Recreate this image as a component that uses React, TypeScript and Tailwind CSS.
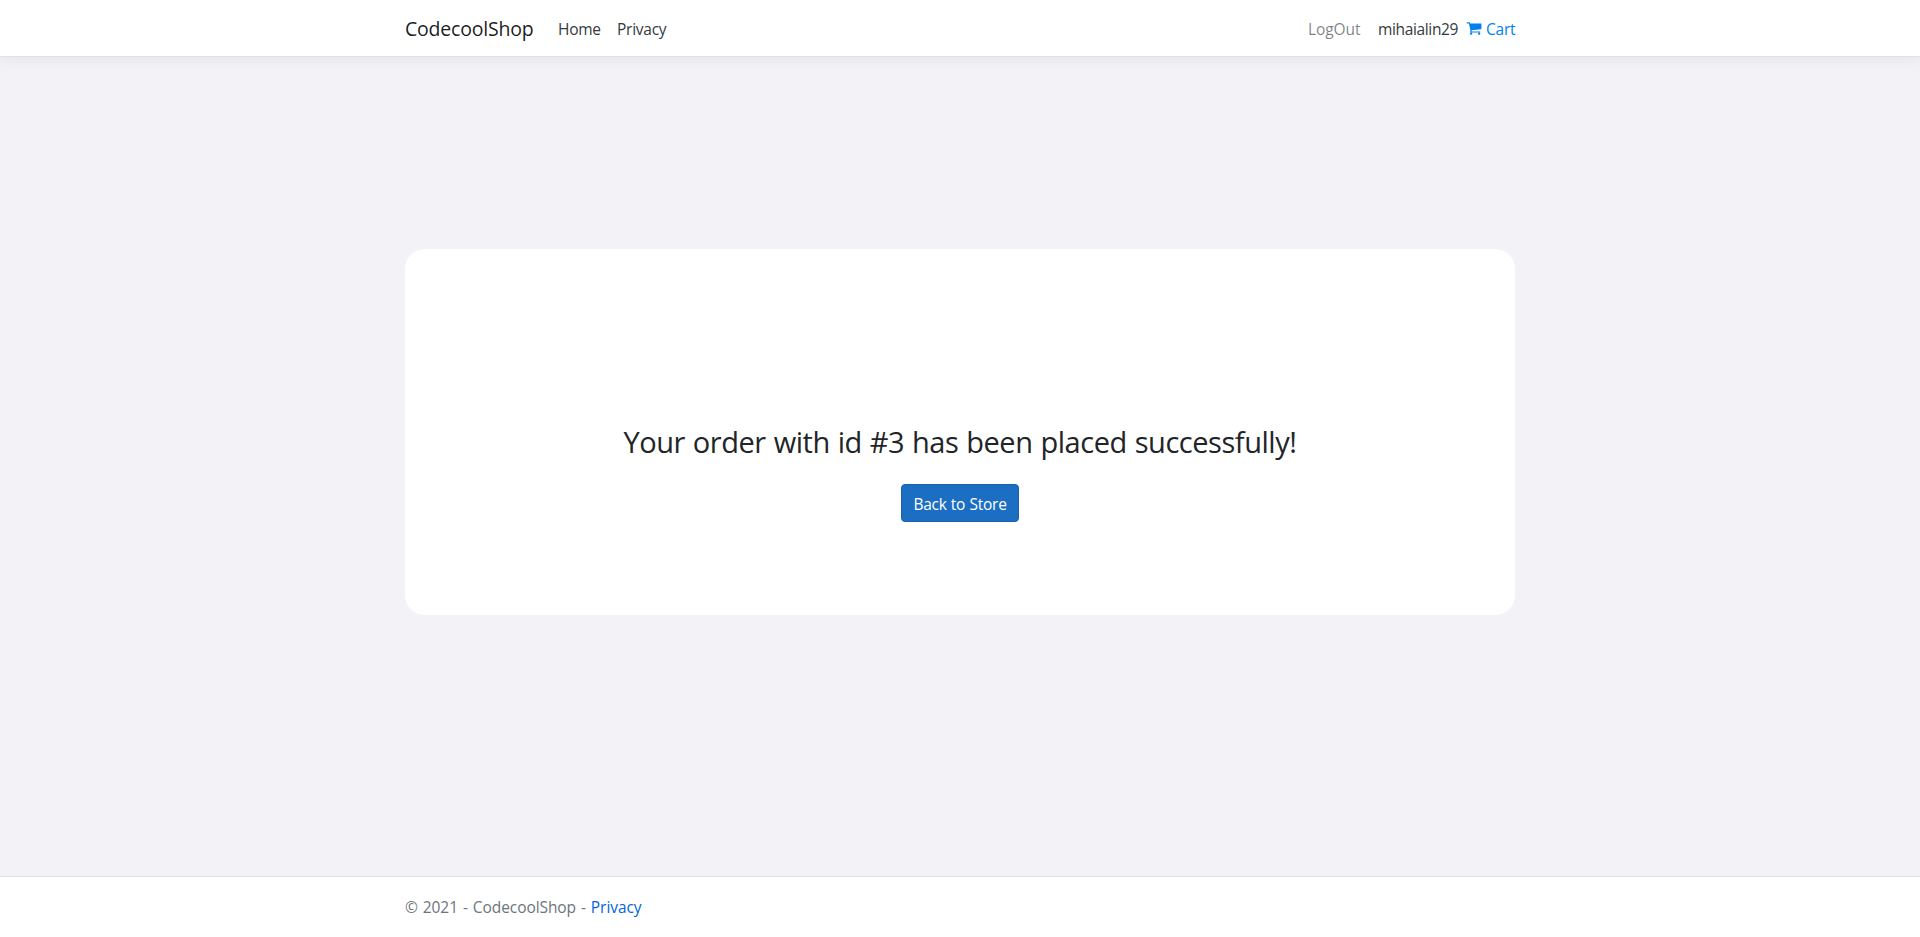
function CartIcon() {
  return (
    <svg viewBox="0 0 1792 1792" className="mr-[4px] mb-0.5 size-4 shrink-0 fill-current" aria-hidden="true">
      <path d="M704 1536q0 52-38 90t-90 38-90-38-38-90 38-90 90-38 90 38 38 90zm896 0q0 52-38 90t-90 38-90-38-38-90 38-90 90-38 90 38 38 90zm128-1088v512q0 24-16.5 42.5t-40.5 21.5l-1044 122q13 60 13 70 0 16-24 64h920q26 0 45 19t19 45-19 45-45 19h-1024q-26 0-45-19t-19-45q0-11 8-31.5t16-36 21.5-40 15.5-29.5l-177-823h-204q-26 0-45-19t-19-45 19-45 45-19h256q16 0 28.5 6.5t19.5 15.5 13 24.5 8 26 5.5 29.5 4.5 26h1201q26 0 45 19t19 45z" />
    </svg>
  );
}

function Header() {
  return (
    <header className="h-[57px] shrink-0 border-b border-[#dee2e6] bg-white shadow-[0_4px_12px_rgba(0,0,0,0.05)]">
      <nav className="mx-auto flex h-14 w-[1110px] items-center justify-between pt-0.5 whitespace-nowrap">
        <div className="flex items-center">
          <a className="w-[153px] text-[19.5px] leading-[30px] tracking-[-0.2px] text-black/90">CodecoolShop</a>
          <a className="w-[59px] text-[#343a40]">Home</a>
          <a className="text-[#343a40]">Privacy</a>
        </div>
        <div className="flex items-center">
          <a className="w-[70px] tracking-[-0.1px] text-black/50">LogOut</a>
          <span className="w-[88px] tracking-[-0.35px] text-[#343a40]">mihaialin29</span>
          <a className="flex w-[49px] items-center text-[#0080f0]">
            <CartIcon />
            Cart
          </a>
        </div>
      </nav>
    </header>
  );
}

export default function App() {
  return (
    <div className="flex h-[937px] flex-col bg-[#f2f2f7] font-['Open_Sans','Noto_Sans',sans-serif] text-[15.5px] leading-6 tracking-[-0.25px] text-[#212529]">
      <Header />
      <main className="mx-auto w-[1110px] grow pt-48">
        <section className="flex h-[366px] flex-col items-center rounded-[20px] bg-white pt-[174px]">
          <h2 className="text-[29px] leading-[38px] tracking-[-0.45px] [word-spacing:0.8px] whitespace-nowrap">
            Your order with id #3 has been placed successfully!
          </h2>
          <button className="mt-[23px] h-[38px] w-[118px] rounded border border-[#1861ac] bg-[#1b6ec2] pt-px tracking-[-0.25px] [word-spacing:0.5px] whitespace-nowrap text-white">
            Back to Store
          </button>
        </section>
      </main>
      <footer className="h-[61px] shrink-0 border-t border-[#dee2e6] bg-white">
        <div className="mx-auto w-[1110px] leading-[60px] tracking-[-0.07px] [word-spacing:1px] text-[#6c757d]">
          &copy; 2021 - CodecoolShop - <a className="text-[#0366d6]">Privacy</a>
        </div>
      </footer>
    </div>
  );
}
